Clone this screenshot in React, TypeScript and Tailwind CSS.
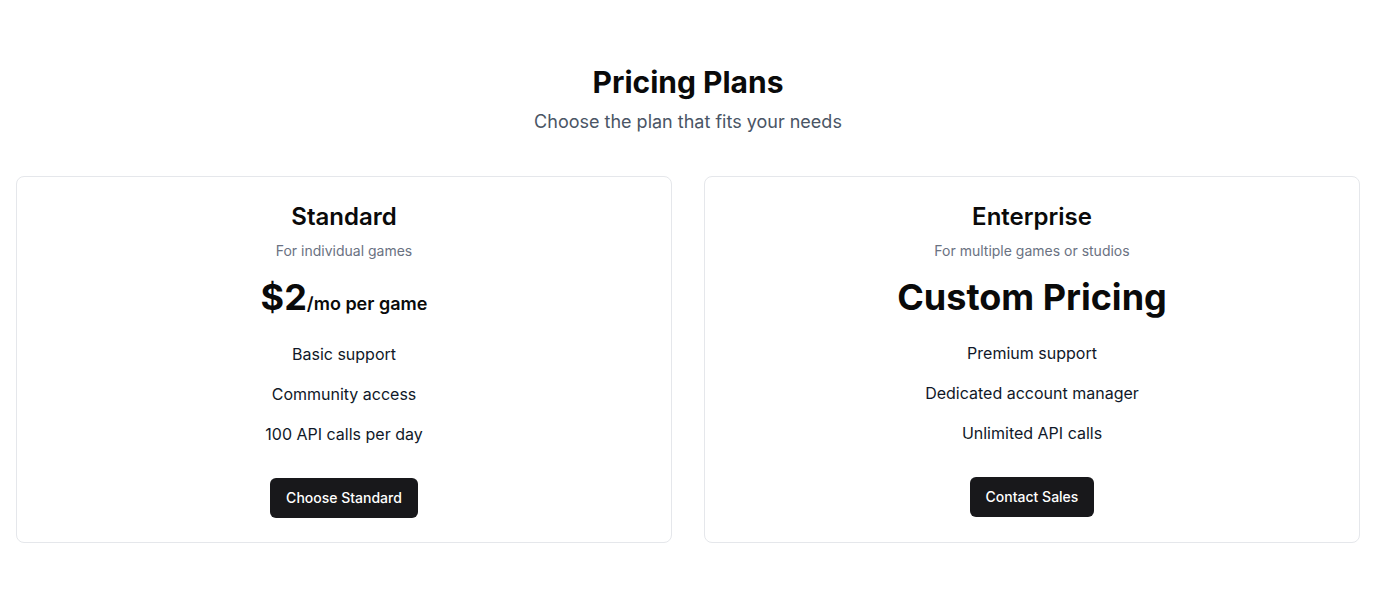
import React from "react";

const plans = [
  {
    name: "Standard",
    desc: "For individual games",
    price: (
      <div className="mt-4 flex items-baseline justify-center">
        <span className="text-4xl font-bold text-[#0a0a0a]">$2</span>
        <span className="text-lg font-semibold text-[#0a0a0a]">/mo per game</span>
      </div>
    ),
    features: ["Basic support", "Community access", "100 API calls per day"],
    cta: "Choose Standard",
  },
  {
    name: "Enterprise",
    desc: "For multiple games or studios",
    price: (
      <div className="mt-4 flex items-baseline justify-center">
        <span className="text-4xl font-bold text-[#0a0a0a]">Custom Pricing</span>
      </div>
    ),
    features: ["Premium support", "Dedicated account manager", "Unlimited API calls"],
    cta: "Contact Sales",
  },
];

export default function App() {
  return (
    <div
      className="min-h-[607px] bg-white px-4 py-16"
      style={{ fontFamily: "Inter, 'Noto Sans', sans-serif" }}
    >
      <div className="text-center">
        <h1 className="text-3xl font-bold text-[#0a0a0a]">Pricing Plans</h1>
        <p className="mt-2 text-lg text-gray-600">Choose the plan that fits your needs</p>
      </div>
      <div className="mt-10 grid grid-cols-2 gap-8">
        {plans.map((p) => (
          <div key={p.name} className="rounded-lg border border-gray-200 bg-white p-6 text-center">
            <h2 className="text-2xl font-semibold text-[#0a0a0a]">{p.name}</h2>
            <p className="mt-2 text-sm text-gray-500">{p.desc}</p>
            {p.price}
            <ul className="mt-6 space-y-4 text-base text-gray-900">
              {p.features.map((f) => (
                <li key={f}>{f}</li>
              ))}
            </ul>
            <button className="mt-8 h-10 rounded-md bg-[#18181b] px-4 text-sm font-medium text-white">
              {p.cta}
            </button>
          </div>
        ))}
      </div>
    </div>
  );
}
